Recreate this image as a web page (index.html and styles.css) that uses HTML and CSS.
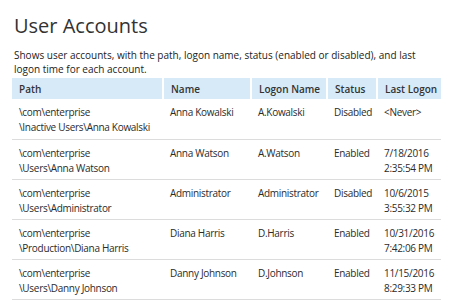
FILE: index.html
```html
<!DOCTYPE html>
<html lang="en">
<head>
  <meta charset="UTF-8" />
  <meta name="viewport" content="width=device-width, initial-scale=1.0"/>
  <title>User Accounts</title>
  <link rel="stylesheet" href="styles.css">
</head>
<body>

  <div class="report">
    <h1>User Accounts</h1>
    <p class="desc">Shows user accounts, with the path, logon name, status (enabled or disabled), and last logon time for each account.</p>

    <table class="accounts">
      <thead>
        <tr>
          <th class="col-path">Path</th>
          <th class="col-name">Name</th>
          <th class="col-logon">Logon Name</th>
          <th class="col-status">Status</th>
          <th class="col-last">Last Logon</th>
        </tr>
      </thead>
      <tbody>
        <tr>
          <td>\com\enterprise<br>\Inactive Users\Anna Kowalski</td>
          <td>Anna Kowalski</td>
          <td>A.Kowalski</td>
          <td>Disabled</td>
          <td>&lt;Never&gt;</td>
        </tr>
        <tr>
          <td>\com\enterprise<br>\Users\Anna Watson</td>
          <td>Anna Watson</td>
          <td>A.Watson</td>
          <td>Enabled</td>
          <td>7/18/2016<br>2:35:54 PM</td>
        </tr>
        <tr>
          <td>\com\enterprise<br>\Users\Administrator</td>
          <td>Administrator</td>
          <td>Administrator</td>
          <td>Disabled</td>
          <td>10/6/2015<br>3:55:32 PM</td>
        </tr>
        <tr>
          <td>\com\enterprise<br>\Production\Diana Harris</td>
          <td>Diana Harris</td>
          <td>D.Harris</td>
          <td>Enabled</td>
          <td>10/31/2016<br>7:42:06 PM</td>
        </tr>
        <tr>
          <td>\com\enterprise<br>\Users\Danny Johnson</td>
          <td>Danny Johnson</td>
          <td>D.Johnson</td>
          <td>Enabled</td>
          <td>11/15/2016<br>8:29:33 PM</td>
        </tr>
      </tbody>
    </table>
  </div>

</body>
</html>
```

FILE: styles.css
```css
* { box-sizing: border-box; margin: 0; padding: 0; }

body {
  background-color: #fff;
  color: #333;
  font-family: 'Open Sans', sans-serif;
}

.report { padding: 12px 10px 0 12px; }

h1 {
  font-size: 20px;
  font-weight: normal;
  color: #333;
  line-height: 28px;
  padding-left: 2px;
}

.desc {
  font-size: 10px;
  line-height: 14px;
  margin-top: 8px;
  padding-left: 2px;
  color: #222;
}

.accounts {
  border-collapse: collapse;
  margin-top: 2px;
  width: 429px;
  table-layout: fixed;
}

.accounts th {
  background-color: #d7eaf8;
  font-size: 10px;
  font-weight: 600;
  text-align: left;
  height: 21px;
  padding: 0 7px;
  border-right: 2px solid #fff;
  white-space: nowrap;
}

.accounts th:last-child { border-right: none; }

.col-path { width: 151px; }
.col-name { width: 88px; }
.col-logon { width: 76px; }
.col-status { width: 50px; }
.col-last { width: 64px; }

.accounts td {
  font-size: 10px;
  letter-spacing: -0.3px;
  line-height: 15px;
  color: #2b2b2b;
  padding: 6px 7px 3px 7px;
  height: 40px;
  vertical-align: top;
  border-bottom: 1px solid #dcdcdc;
  white-space: nowrap;
}
```
